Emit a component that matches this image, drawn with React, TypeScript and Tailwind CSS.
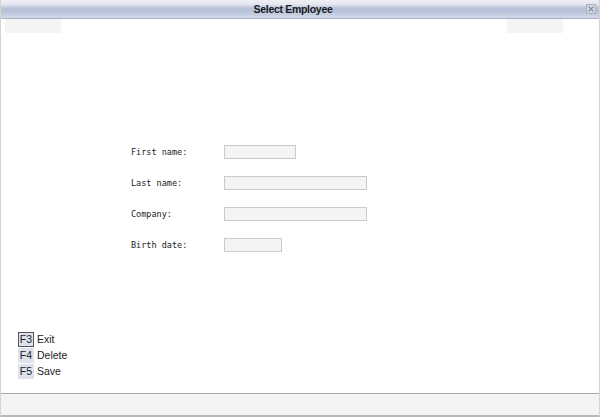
import React from "react";

const FIELDS = [
  { label: "First name:", width: "w-[72px]" },
  { label: "Last name:", width: "w-[143px]" },
  { label: "Company:", width: "w-[143px]" },
  { label: "Birth date:", width: "w-[58px]" },
];

const KEYS = [
  { key: "F3", label: "Exit", active: true },
  { key: "F4", label: "Delete", active: false },
  { key: "F5", label: "Save", active: false },
];

function CloseIcon() {
  return (
    <svg width="10" height="10" viewBox="0 0 10 10" className="block">
      <rect x="0.5" y="0.5" width="9" height="9" fill="#d6dbe6" stroke="#a9b0bf" />
      <path d="M2.5 2.5 L7.5 7.5 M7.5 2.5 L2.5 7.5" stroke="#8a90a0" strokeWidth="1.4" />
    </svg>
  );
}

export default function App() {
  return (
    <div className="flex h-[417px] w-[600px] flex-col overflow-hidden border-x border-[#d9d3c6] bg-white font-['Liberation_Sans',sans-serif]">
      {/* title bar */}
      <div className="relative flex h-[19px] shrink-0 items-center justify-center border-b border-[#a9b1c4] bg-[linear-gradient(to_bottom,#f0f1f6_0%,#e2e5ee_25%,#b7c2da_45%,#b9c4db_65%,#d4dae8_100%)] pr-[14px]">
        <span className="text-[10.5px] font-bold leading-none tracking-[-0.3px] text-[#1a1a1a]">Select Employee</span>
        <div className="absolute right-[3px] top-[4px]">
          <CloseIcon />
        </div>
      </div>

      {/* toolbar placeholders */}
      <div className="flex h-[14px] shrink-0 justify-between px-[4px]">
        <div className="h-[14px] w-[56px] bg-[#f4f4f4]" />
        <div className="mr-[32px] h-[14px] w-[56px] bg-[#f4f4f4]" />
      </div>

      {/* form */}
      <div className="flex flex-1 flex-col">
        <div className="ml-[130px] mt-[112px] flex flex-col gap-[17px] font-['DejaVu_Sans_Mono',monospace] text-[8.5px] text-[#222]">
          {FIELDS.map((f) => (
            <div key={f.label} className="flex h-[14px] items-center">
              <span className="w-[93px]">{f.label}</span>
              <div className={`h-[14px] border border-[#cbcbcb] bg-[#f4f4f4] ${f.width}`} />
            </div>
          ))}
        </div>

        <div className="ml-[17px] mt-auto mb-[14px] flex flex-col gap-[1px] text-[10.5px] text-[#222]">
          {KEYS.map((k) => (
            <div key={k.key} className="flex h-[15px] items-center gap-[3px]">
              <span
                className={`flex h-[15px] w-[16px] items-center justify-center bg-[#dde2ec] leading-none ${
                  k.active ? "border border-[#555]" : "border border-[#dde2ec]"
                }`}
              >
                {k.key}
              </span>
              <span>{k.label}</span>
            </div>
          ))}
        </div>
      </div>

      {/* status bar */}
      <div className="h-[24px] shrink-0 border-t border-[#a8a8a8] border-b-2 border-b-[#b8b8b8] bg-[#f4f4f4]" />
    </div>
  );
}
